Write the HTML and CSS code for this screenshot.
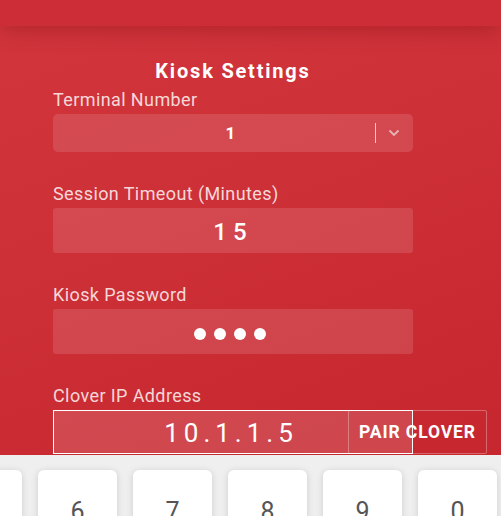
FILE: index.html
```html
<!DOCTYPE html>
<html lang="en">
<head>
<meta charset="UTF-8">
<meta name="viewport" content="width=device-width, initial-scale=1.0">
<title>Kiosk Settings</title>
<link rel="stylesheet" href="styles.css">
</head>
<body>

<div class="topbar"></div>

<!-- Settings Form -->
<div class="settings">
<div class="settings-title">Kiosk Settings</div>

<div class="field">
<div class="field-label">Terminal Number</div>
<div class="select-box">
<div class="select-value">1</div>
<div class="select-sep"></div>
<svg class="select-arrow" width="12" height="8" viewBox="0 0 12 8"><path d="M1.5 1.5 L6 6 L10.5 1.5" fill="none" stroke="#e6b5b8" stroke-width="1.8"/></svg>
</div>
</div>

<div class="field">
<div class="field-label">Session Timeout (Minutes)</div>
<div class="input-box timeout">15</div>
</div>

<div class="field">
<div class="field-label">Kiosk Password</div>
<!-- masked value -->
<div class="input-box password">
<span class="dot"></span><span class="dot"></span><span class="dot"></span><span class="dot"></span>
</div>
</div>

<div class="field">
<div class="field-label">Clover IP Address</div>
<div class="ip-row">
<div class="input-box ip">10.1.1.5</div>
<button class="pair-btn">PAIR CLOVER</button>
</div>
</div>
</div>

<!-- On-screen Keypad -->
<div class="keypad">
<div class="keys">
<div class="key">5</div>
<div class="key">6</div>
<div class="key">7</div>
<div class="key">8</div>
<div class="key">9</div>
<div class="key">0</div>
</div>
</div>

</body>
</html>
```

FILE: styles.css
```css
* {
margin: 0;
padding: 0;
box-sizing: border-box;
font-family: Roboto, "Liberation Sans", sans-serif;
}

body {
width: 501px;
height: 516px;
overflow: hidden;
background: linear-gradient(160deg, #d2353c 0%, #cd2f37 45%, #c5252d 100%);
color: #fff;
}

.topbar {
height: 26px;
background: #cd2d36;
box-shadow: 0 4px 22px rgba(90, 0, 0, 0.28);
position: relative;
}

.settings {
width: 360px;
margin-left: 53px;
padding-top: 32px;
}

.settings-title {
text-align: center;
font-size: 20px;
font-weight: bold;
letter-spacing: 1.8px;
line-height: 26px;
margin-bottom: 6px;
}

.field {
margin-bottom: 32px;
}

.field-label {
font-size: 18px;
letter-spacing: 0.4px;
line-height: 20px;
color: rgba(255, 255, 255, 0.82);
margin-bottom: 4px;
}

.select-box {
height: 38px;
border-radius: 5px;
background: rgba(255, 255, 255, 0.12);
display: flex;
align-items: center;
}

.select-value {
flex: 1;
text-align: center;
font-size: 17px;
font-weight: bold;
padding-left: 33px;
}

.select-sep {
width: 1px;
height: 20px;
background: rgba(255, 255, 255, 0.7);
}

.select-arrow {
margin: 0 13px 0 12px;
}

.input-box {
height: 45px;
border-radius: 3px;
background: rgba(255, 255, 255, 0.12);
display: flex;
align-items: center;
justify-content: center;
}

.timeout {
font-size: 24px;
font-weight: 500;
letter-spacing: 6px;
padding-top: 2px;
}

.password {
gap: 8px;
padding-top: 4px;
padding-right: 6px;
}

.dot {
width: 12px;
height: 12px;
border-radius: 50%;
background: #fff;
}

.ip-row {
display: flex;
}

.ip {
width: 360px;
flex: none;
height: 44px;
border: 1px solid #fff;
border-radius: 0;
background: rgba(255, 255, 255, 0.14);
font-size: 26px;
letter-spacing: 5px;
padding-right: 4px;
padding-top: 2px;
}

.pair-btn {
flex: none;
width: 139px;
height: 44px;
margin-left: -65px;
background: transparent;
border: 1px solid rgba(255, 255, 255, 0.3);
border-radius: 2px;
color: #fff;
font-size: 17.5px;
font-weight: bold;
letter-spacing: 0.9px;
}

.keypad {
position: absolute;
left: 0;
right: 0;
top: 455px;
bottom: 0;
background: #efefef;
overflow: hidden;
padding-top: 15px;
}

.keys {
display: flex;
gap: 16px;
margin-left: -57px;
}

.key {
width: 79px;
height: 70px;
flex: none;
background: #fff;
border-radius: 6px;
box-shadow: 0 1px 7px rgba(0, 0, 0, 0.14);
text-align: center;
padding-top: 27px;
font-size: 25px;
color: #555;
}
```
